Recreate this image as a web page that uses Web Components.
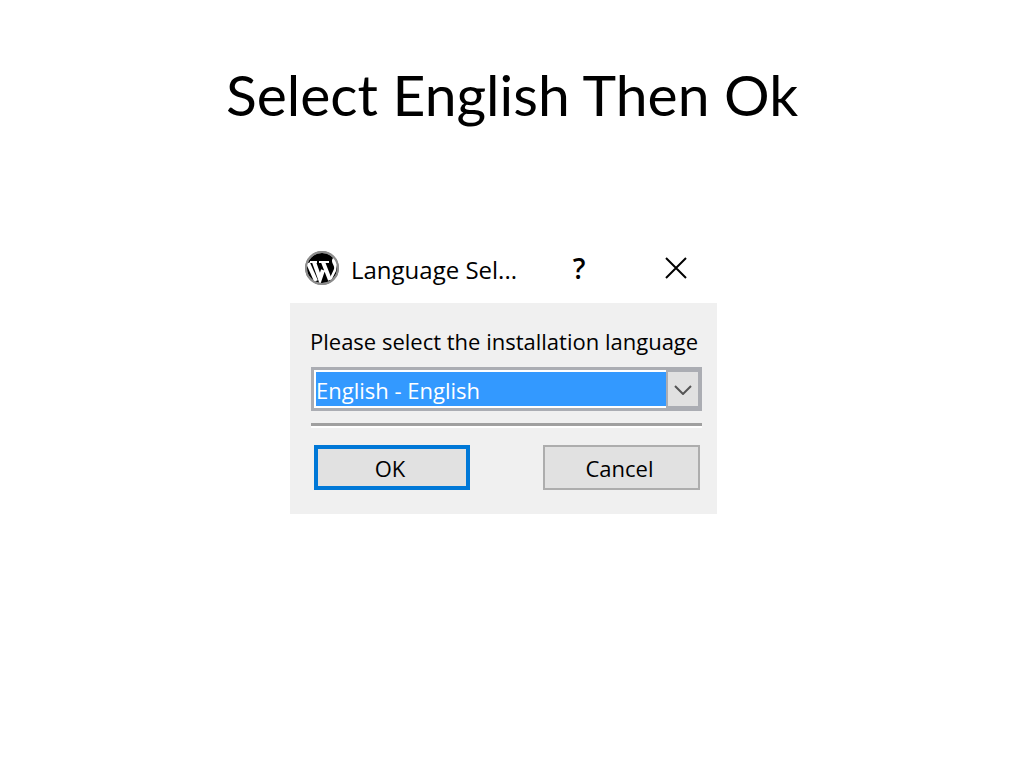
<!DOCTYPE html>
<html lang="en">
<head>
<meta charset="utf-8">
<title>Select English Then Ok</title>
<style>
body { margin: 0; background: #fff; color: #000; font-family: "Open Sans", sans-serif; }
</style>
</head>
<body>
<slide-page>
  <span slot="title">Select English Then Ok</span>
  <language-dialog>
    <span slot="title">Language Sel...</span>
    <language-picker label="Please select the installation language"></language-picker>
    <dialog-button slot="actions" primary>OK</dialog-button>
    <dialog-button slot="actions">Cancel</dialog-button>
  </language-dialog>
</slide-page>
<script>
class ShadowElement extends HTMLElement {
  constructor() {
    super();
    this.attachShadow({ mode: "open" }).innerHTML = this.constructor.markup;
  }
}

customElements.define("slide-page", class extends ShadowElement {
  static markup = `
    <style>
      :host { display: flex; flex-direction: column; align-items: center; min-height: 100vh; box-sizing: border-box; padding-top: 58px; }
      h1 { margin: 0 0 106px; font: 400 57px/72px Lato, "Open Sans", sans-serif; text-align: center; }
      main { display: flex; justify-content: center; width: 100%; box-sizing: border-box; padding-right: 17px; }
    </style>
    <h1><slot name="title"></slot></h1>
    <main><slot></slot></main>`;
});

customElements.define("wordpress-mark", class extends ShadowElement {
  static markup = `
    <style>:host { display: block; width: 34px; height: 34px; } svg { display: block; width: 100%; height: 100%; }</style>
    <svg viewBox="0 0 34 34" aria-hidden="true">
      <circle cx="17" cy="17" r="16" fill="#000" stroke="#8c8c8c" stroke-width="2"/>
      <path d="M3 12L11 30" fill="none" stroke="#fff" stroke-width="4"/>
      <path d="M5 11H12M14 11H24" fill="none" stroke="#fff" stroke-width="2"/>
      <path d="M9 11L15 28L18 19M18 11L25 29" fill="none" stroke="#fff" stroke-width="4"/>
      <path d="M24 29L29 18C30 15 27 13 27 10C27 8 28 6 30 7L32 13L31 20L27 28Z" fill="#fff"/>
      <circle cx="17" cy="17" r="16" fill="none" stroke="#8c8c8c" stroke-width="2"/>
    </svg>`;
});

customElements.define("language-dialog", class extends ShadowElement {
  static markup = `
    <style>
      :host { display: block; width: 427px; max-width: 100%; }
      header { display: flex; align-items: center; height: 64px; box-sizing: border-box; margin-bottom: 3px; padding-left: 15px; }
      h2 { flex: 1; margin: 4px 0 0 12px; font-size: 24px; line-height: 32px; font-weight: 400; white-space: nowrap; }
      button { width: 112px; height: 64px; padding: 0; border: 0; background: none; color: inherit; font: 600 28px/32px "Open Sans", sans-serif; display: grid; place-items: center; }
      button:last-child { width: 82px; }
      svg { display: block; width: 24px; height: 24px; }
      section { background: #f0f0f0; padding: 20px 15px 24px 21px; }
      hr { height: 3px; margin: 12px 0 17px; border: 0; background: #a0a0a0; box-shadow: 0 2px #fff; }
      footer { display: flex; justify-content: space-between; padding: 2px 2px 0 3px; }
    </style>
    <header>
      <wordpress-mark></wordpress-mark>
      <h2><slot name="title"></slot></h2>
      <button type="button">?</button>
      <button type="button" aria-label="Close"><svg viewBox="0 0 24 24"><path d="M2 2L22 22M22 2L2 22" fill="none" stroke="#000" stroke-width="2"/></svg></button>
    </header>
    <section>
      <slot></slot>
      <hr>
      <footer><slot name="actions"></slot></footer>
    </section>`;
});

customElements.define("language-picker", class extends ShadowElement {
  static markup = `
    <style>
      :host { display: block; }
      label { display: block; height: 32px; margin: 0 0 12px -1px; font: 22px/36px "Open Sans", sans-serif; white-space: nowrap; }
      .box { display: grid; grid-template-columns: 1fr 36px; height: 44px; }
      select { grid-area: 1 / 1 / 2 / 3; appearance: none; width: 100%; height: 44px; box-sizing: border-box; margin: 0; padding: 2px 36px 0 2px; border: 3px solid #abadb3; border-radius: 0; outline: 0; background: #3399ff; box-shadow: inset 0 0 0 2px #fff; color: #fff; font: 22px/34px "Open Sans", sans-serif; }
      .arrow { grid-area: 1 / 2; pointer-events: none; z-index: 1; display: grid; place-items: center; box-sizing: border-box; border: solid #abadb3; border-width: 5px 4px 5px 2px; background: #e1e1e1; }
      svg { display: block; width: 20px; height: 12px; }
    </style>
    <label for="language"></label>
    <div class="box">
      <select id="language"><option>English - English</option></select>
      <span class="arrow"><svg viewBox="0 0 20 12" aria-hidden="true"><path d="M2 3L10 11L18 3" fill="none" stroke="#555" stroke-width="2"/></svg></span>
    </div>`;
  connectedCallback() {
    this.shadowRoot.querySelector("label").textContent = this.getAttribute("label");
  }
});

customElements.define("dialog-button", class extends ShadowElement {
  static markup = `
    <style>
      :host { display: block; width: 157px; }
      button { width: 100%; height: 45px; padding: 0 4px 0 0; box-sizing: border-box; border: 2px solid #adadad; border-radius: 0; background: #e1e1e1; color: #000; font: 22px/32px "Open Sans", sans-serif; }
      :host([primary]) { width: 156px; }
      :host([primary]) button { border: 4px solid #0078d7; }
    </style>
    <button type="button"><slot></slot></button>`;
});
</script>
</body>
</html>
